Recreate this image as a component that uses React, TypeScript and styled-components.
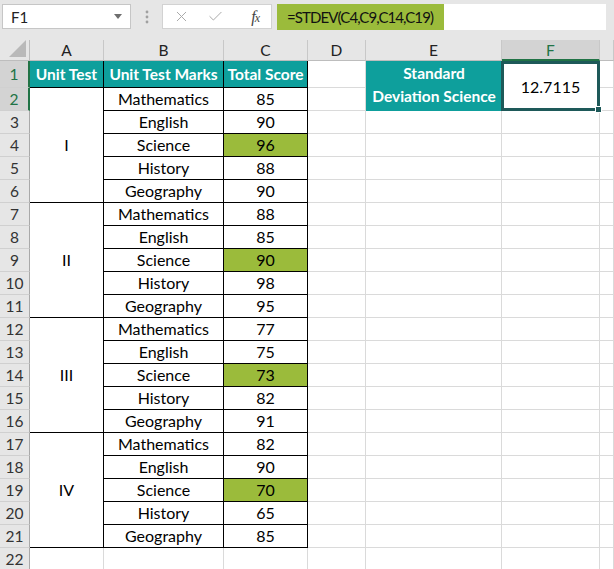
import React from "react";
import styled, { createGlobalStyle } from "styled-components";
import { X, Check } from "lucide-react";

const GlobalStyle = createGlobalStyle`
	body {
		margin: 0;
		background: #ffffff;
		font-family: Lato, "Open Sans", sans-serif;
		overflow: hidden;
	}
`;

const Page = styled.div`
	width: 614px;
	height: 569px;
	overflow: hidden;
	background: #e6e6e6;
`;

const Toolbar = styled.div`
	display: flex;
	align-items: center;
	height: 25px;
	padding: 4px 8px 11px 2px;
`;

const NameBox = styled.div`
	box-sizing: border-box;
	width: 129px;
	height: 25px;
	background: #ffffff;
	border: 1px solid #c6c6c6;
	display: flex;
	align-items: center;
	justify-content: space-between;
	padding: 0 8px;
	font-size: 15px;
	color: #222;
`;

const Caret = styled.span`
	width: 0;
	height: 0;
	border-left: 4px solid transparent;
	border-right: 4px solid transparent;
	border-top: 5px solid #6e6e6e;
`;

const Grip = styled.div`
	width: 31px;
	display: flex;
	justify-content: center;
`;

const ButtonBox = styled.div`
	box-sizing: border-box;
	width: 110px;
	height: 25px;
	background: #ffffff;
	border: 1px solid #d2d2d2;
	display: flex;
	align-items: center;
	gap: 17px;
	padding: 0 12px 0 10px;
	color: #a8a8a8;
`;

const Fx = styled.span`
	margin-left: auto;
	font-family: "Liberation Serif", serif;
	font-style: italic;
	font-size: 16px;
	color: #444;
	letter-spacing: -1px;

	small {
		font-size: 12px;
	}
`;

const FormulaBar = styled.div`
	flex: 1;
	height: 26px;
	margin-left: 5px;
	background: #ffffff;
	display: flex;
`;

const FormulaText = styled.div`
	background: #9bbb3b;
	padding: 0 11px 0 10px;
	display: flex;
	align-items: center;
	font-size: 15px;
	letter-spacing: -0.9px;
	color: #111;
`;

const Sheet = styled.div`
	display: grid;
	grid-template-columns: 30px 74px 120px 84px 58px 136px 98px 1fr;
	grid-template-rows: 21px 27px repeat(21, 23px);
	background: #ffffff;
	font-size: 16px;
	color: #000;
`;

const Corner = styled.div`
	grid-row: 1;
	grid-column: 1;
	background: #e6e6e6;
	border-right: 1px solid #bdbdbd;
	border-bottom: 1px solid #bdbdbd;
	position: relative;

	&::after {
		content: "";
		position: absolute;
		right: 3px;
		bottom: 3px;
		border-left: 17px solid transparent;
		border-bottom: 17px solid #b9b9b9;
	}
`;

const ColHeader = styled.div<{ $c: number; $active?: boolean }>`
	grid-row: 1;
	grid-column: ${(p) => p.$c};
	background: ${(p) => (p.$active ? "#d3d3d3" : "#e6e6e6")};
	color: ${(p) => (p.$active ? "#217346" : "#222")};
	border-right: 1px solid #c8c8c8;
	border-bottom: ${(p) => (p.$active ? "2px solid #217346" : "1px solid #bdbdbd")};
	display: flex;
	align-items: center;
	justify-content: center;
	box-sizing: border-box;
	font-size: 15.5px;
`;

const RowHeader = styled.div<{ $r: number; $active?: boolean }>`
	grid-row: ${(p) => p.$r};
	grid-column: 1;
	background: ${(p) => (p.$active ? "#d3d3d3" : "#e6e6e6")};
	color: ${(p) => (p.$active ? "#217346" : "#333")};
	border-right: ${(p) => (p.$active ? "2px solid #217346" : "1px solid #a9a9a9")};
	border-bottom: 1px solid #d0d0d0;
	display: flex;
	align-items: center;
	justify-content: center;
	box-sizing: border-box;
	font-size: 15.5px;
`;

const Cell = styled.div<{ $r: number; $c: number; $span?: number }>`
	grid-row: ${(p) => p.$r} / span ${(p) => p.$span ?? 1};
	grid-column: ${(p) => p.$c};
	border-right: 1px solid #dadada;
	border-bottom: 1px solid #dadada;
	box-sizing: border-box;
`;

type Tone = "plain" | "head" | "mark";

const TableCell = styled.div<{ $r: number; $c: number; $span?: number; $tone?: Tone }>`
	grid-row: ${(p) => p.$r} / span ${(p) => p.$span ?? 1};
	grid-column: ${(p) => p.$c};
	background: ${(p) =>
		p.$tone === "head" ? "#0e9f9c" : p.$tone === "mark" ? "#9bbb3b" : "#ffffff"};
	color: ${(p) => (p.$tone === "head" ? "#ffffff" : "#000")};
	font-weight: ${(p) => (p.$tone === "head" ? 700 : 400)};
	font-size: ${(p) => (p.$tone === "head" ? "15.5px" : "16px")};
	border-right: 1px solid #000;
	border-bottom: 1px solid #000;
	box-sizing: border-box;
	display: flex;
	align-items: center;
	justify-content: center;
	padding-bottom: 1px;
	white-space: nowrap;
`;

const Label = styled.div`
	grid-row: 2 / span 2;
	grid-column: 6;
	background: #0e9f9c;
	color: #ffffff;
	font-weight: 700;
	font-size: 15.5px;
	text-align: center;
	line-height: 23px;
	padding-top: 1px;
	box-sizing: border-box;
`;

const Result = styled.div`
	grid-row: 2 / span 2;
	grid-column: 7;
	border: 3px solid #1e5959;
	margin-left: -1px;
	box-sizing: border-box;
	display: flex;
	align-items: center;
	justify-content: center;
	position: relative;
	background: #ffffff;

	&::after {
		content: "";
		position: absolute;
		right: -5px;
		bottom: -5px;
		width: 5px;
		height: 5px;
		background: #1e5959;
		border: 1px solid #ffffff;
	}
`;

const groups = [
	{ name: "I", scores: [85, 90, 96, 88, 90] },
	{ name: "II", scores: [88, 85, 90, 98, 95] },
	{ name: "III", scores: [77, 75, 73, 82, 91] },
	{ name: "IV", scores: [82, 90, 70, 65, 85] },
];

const subjects = ["Mathematics", "English", "Science", "History", "Geography"];
const columns = ["A", "B", "C", "D", "E", "F", ""];

const GripDots = () => (
	<svg width="4" height="14" viewBox="0 0 4 14">
		<circle cx="2" cy="2" r="1.4" fill="#a0a0a0" />
		<circle cx="2" cy="7" r="1.4" fill="#a0a0a0" />
		<circle cx="2" cy="12" r="1.4" fill="#a0a0a0" />
	</svg>
);

export default function App() {
	// grid row = sheet row + 1, grid column = sheet column + 1
	const rows = Array.from({ length: 22 }, (_, i) => i + 1);

	return (
		<Page>
			<GlobalStyle />
			<Toolbar>
				<NameBox>
					F1
					<Caret />
				</NameBox>
				<Grip>
					<GripDots />
				</Grip>
				<ButtonBox>
					<X size={17} strokeWidth={1.4} />
					<Check size={17} strokeWidth={1.4} />
					<Fx>
						f<small>x</small>
					</Fx>
				</ButtonBox>
				<FormulaBar>
					<FormulaText>=STDEV(C4,C9,C14,C19)</FormulaText>
				</FormulaBar>
			</Toolbar>
			<Sheet>
				<Corner />
				{columns.map((c, i) => (
					<ColHeader key={i} $c={i + 2} $active={c === "F"}>
						{c}
					</ColHeader>
				))}
				{rows.map((r) => (
					<RowHeader key={r} $r={r + 1} $active={r <= 2}>
						{r}
					</RowHeader>
				))}

				<TableCell $r={2} $c={2} $tone="head">Unit Test</TableCell>
				<TableCell $r={2} $c={3} $tone="head">Unit Test Marks</TableCell>
				<TableCell $r={2} $c={4} $tone="head">Total Score</TableCell>

				{groups.map((g, gi) => {
					const start = 3 + gi * 5;
					return (
						<React.Fragment key={g.name}>
							<TableCell $r={start} $c={2} $span={5}>
								{g.name}
							</TableCell>
							{subjects.map((s, si) => (
								<React.Fragment key={s}>
									<TableCell $r={start + si} $c={3}>{s}</TableCell>
									<TableCell $r={start + si} $c={4} $tone={si === 2 ? "mark" : "plain"}>
										{g.scores[si]}
									</TableCell>
								</React.Fragment>
							))}
						</React.Fragment>
					);
				})}

				<Label>
					Standard
					<br />
					Deviation Science
				</Label>
				<Result>12.7115</Result>

				{rows.map((r) => (
					<React.Fragment key={r}>
						{r === 22 && [2, 3, 4].map((c) => <Cell key={c} $r={23} $c={c} />)}
						<Cell $r={r + 1} $c={5} />
						{r > 2 && <Cell $r={r + 1} $c={6} />}
						{r > 2 && <Cell $r={r + 1} $c={7} />}
						<Cell $r={r + 1} $c={8} />
					</React.Fragment>
				))}
			</Sheet>
		</Page>
	);
}
